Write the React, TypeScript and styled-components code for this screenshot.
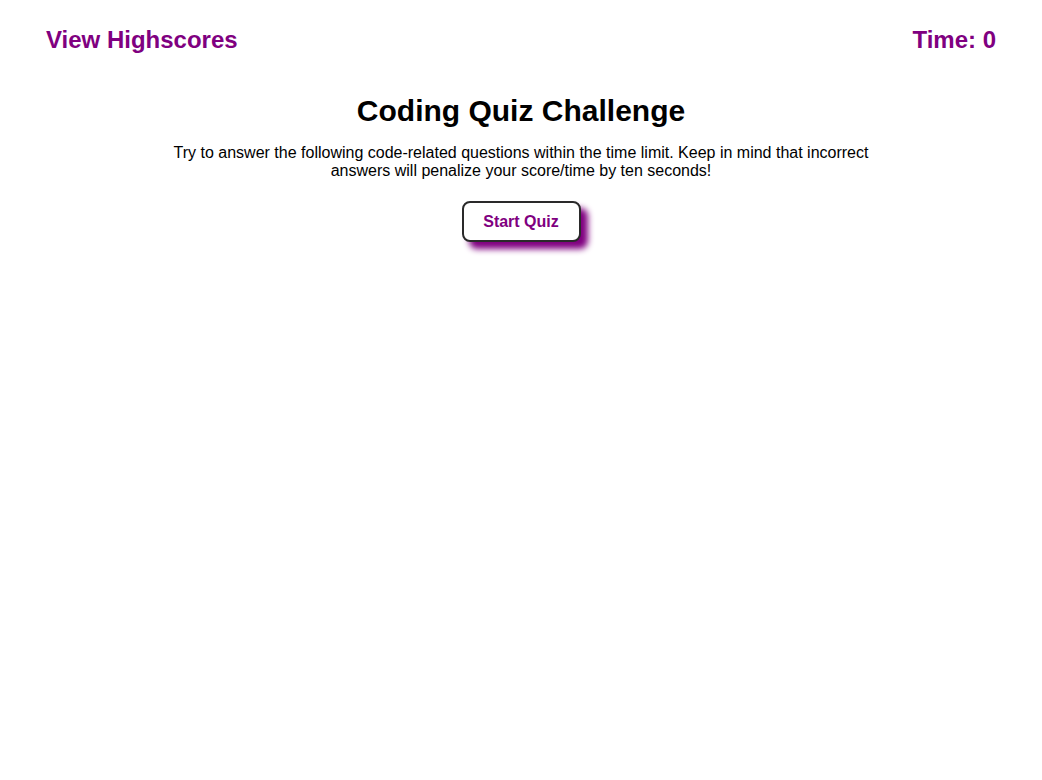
import React from "react";
import styled, { createGlobalStyle } from "styled-components";

const Global = createGlobalStyle`
  html, body { margin: 0; padding: 0; background: #fff; }
  body { font-family: "Liberation Sans", Arial, sans-serif; color: #000; }
  #root { min-height: 100vh; }
`;

const Header = styled.header`
  display: flex;
  justify-content: space-between;
  align-items: center;
  padding: 26px 46px 0 46px;
`;

const HeaderItem = styled.div`
  color: #800080;
  font-size: 24px;
  font-weight: bold;
  line-height: 28px;
`;

const Main = styled.main`
  display: flex;
  flex-direction: column;
  align-items: center;
  text-align: center;
  padding: 39px 0 40px 0;
`;

const Title = styled.h1`
  margin: 0;
  font-size: 30px;
  line-height: 36px;
  font-weight: bold;
`;

const Intro = styled.p`
  margin: 15px 0 0 0;
  max-width: 720px;
  font-size: 16px;
  line-height: 18px;
`;

const StartButton = styled.button`
  margin-top: 21px;
  width: 119px;
  height: 41px;
  background: #fff;
  border: 2px solid #2a2a2a;
  border-radius: 8px;
  box-shadow: 7px 7px 6px #800080;
  color: #800080;
  font-family: "Liberation Sans", Arial, sans-serif;
  font-size: 16px;
  font-weight: bold;
  cursor: pointer;
`;

export default function App() {
  return (
    <>
      <Global />
      <Header>
        <HeaderItem>View Highscores</HeaderItem>
        <HeaderItem>Time: 0</HeaderItem>
      </Header>
      <Main>
        <Title>Coding Quiz Challenge</Title>
        <Intro>
          Try to answer the following code-related questions within the time limit. Keep in mind that incorrect answers will penalize your score/time by ten seconds!
        </Intro>
        <StartButton>Start Quiz</StartButton>
      </Main>
    </>
  );
}
